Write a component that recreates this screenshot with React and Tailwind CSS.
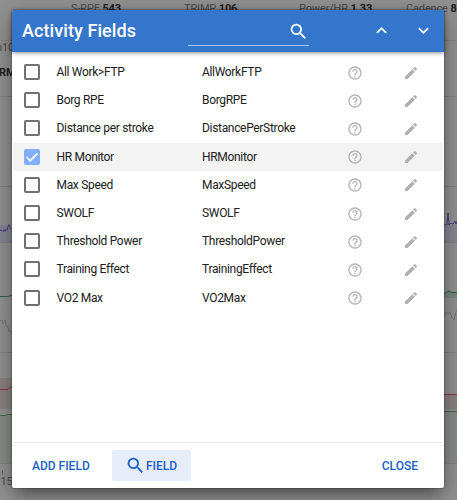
import React, { useState } from 'react';
import { MdSearch, MdExpandLess, MdExpandMore, MdHelpOutline, MdEdit } from 'react-icons/md';

const FIELDS = [
  { name: 'All Work>FTP', code: 'AllWorkFTP' },
  { name: 'Borg RPE', code: 'BorgRPE' },
  { name: 'Distance per stroke', code: 'DistancePerStroke' },
  { name: 'HR Monitor', code: 'HRMonitor' },
  { name: 'Max Speed', code: 'MaxSpeed' },
  { name: 'SWOLF', code: 'SWOLF' },
  { name: 'Threshold Power', code: 'ThresholdPower' },
  { name: 'Training Effect', code: 'TrainingEffect' },
  { name: 'VO2 Max', code: 'VO2Max' },
];

// Dimmed activity page behind the dialog
function Backdrop() {
  return (
    <div className="absolute inset-0 bg-[#919191] text-[11px] leading-[14px] tracking-[-0.15px] whitespace-nowrap text-[#4b4b4b]">
      <svg width="457" height="500" viewBox="0 0 457 500" fill="none" className="absolute inset-0">
        <path d="M0 40.5H457M0 96.5H457M0 186.5H457" stroke="#838383" />
        <path d="M0 225h12v17H0zM444 225h13v17h-13z" fill="#858592" />
        <path d="M0 378h12v30H0zM444 395h13v13h-13z" fill="#8a8080" />
        <path d="M0 415h12v48H0zM444 412h13v51h-13z" fill="#868b86" />
        <path d="M444 293l5-2 8 2v5h-13z" fill="#78877d" />
        <path d="M0 242.5H457M0 352.5H457M0 408.5H457M0 463.5H457" stroke="#838383" />
        <path d="M0 230l2 .5 1 1 1-2 1 2 1-2 1 1 1-4 1-2 1 3 1 1 1 1" stroke="#4a3d82" />
        <path d="M444 226l2-2 1 1 1-12 1 12 2-2 1 1 2-1 1-2 1 3 1-3" stroke="#4a3d82" />
        <path d="M0 296.500h7l5-1" stroke="#2b5e49" />
        <path d="M444 294l2-1.500 3-1.500 3 1.500h5" stroke="#2c6138" />
        <path d="M0 321l2-1 1 4 2-4 1 6 2 1 1 5 1-2 2 3M444 317l2-5 2 2 2-2 2 6 2 2 1-5 2-5" stroke="#777" />
        <path d="M0 389.500h8l2-2 2-1M444 394.500h13" stroke="#8b3349" />
        <path d="M0 415.500h5l3-1h4M444 411.500h13" stroke="#426a42" />
        <path d="M2.500 470v5" stroke="#666" />
      </svg>
      <span className="absolute left-[71px] top-[2px]">S-RPE <b className="font-bold text-[#1c1c1c]">543</b></span>
      <span className="absolute left-[184px] top-[2px]">TRIMP <b className="font-bold text-[#1c1c1c]">106</b></span>
      <span className="absolute left-[299px] top-[2px]">Power/HR <b className="font-bold text-[#1c1c1c]">1.33</b></span>
      <span className="absolute left-[406px] top-[2px]">Cadence <b className="font-bold text-[#1c1c1c]">8</b></span>
      <span className="absolute left-[-4px] top-[41px]">n10</span>
      <span className="absolute left-[-1px] top-[66px] font-bold text-[#222]">RM</span>
      <span className="absolute left-[-2px] top-[475px]">:15</span>
    </div>
  );
}

function Checkbox({ checked, onChange }) {
  return (
    <button
      role="checkbox"
      aria-checked={checked}
      onClick={onChange}
      className={`flex h-[16px] w-[16px] items-center justify-center rounded-[2px] ${
        checked ? 'bg-[#82aefa]' : 'border-2 border-[#707070]'
      }`}
    >
      {checked && (
        <svg width="16" height="16" viewBox="0 0 16 16" fill="none">
          <path d="M2.500 8l3.700 3.700L13.500 4.300" stroke="#fff" strokeWidth="1.700" />
        </svg>
      )}
    </button>
  );
}

export default function App() {
  const [selected, setSelected] = useState('HRMonitor');

  return (
    <div className="relative h-[500px] w-[457px] overflow-hidden font-[Roboto,sans-serif]">
      <Backdrop />
      <div className="relative flex h-full pt-[10px] pr-[13px] pb-[12px] pl-[12px]">
        <div className="flex flex-1 flex-col rounded-[2px] bg-white shadow-[0_9px_13px_-6px_rgba(0,0,0,0.35),0_0_2px_rgba(0,0,0,0.5),0_6px_22px_2px_rgba(0,0,0,0.28)]">
          <header className="z-10 flex h-[41.500px] shrink-0 items-center rounded-t-[2px] bg-[#3476cc] pl-[10px] text-white shadow-[0_1px_4px_rgba(0,0,0,0.45)]">
            <h1 className="w-[166px] text-[18px] leading-[24px] font-medium tracking-[0.08px]">Activity Fields</h1>
            <div className="mt-[1px] flex h-[29px] w-[121px] items-start justify-end border-b border-[#a9c6ec] pt-[4px]">
              <MdSearch size={21} />
            </div>
            <MdExpandLess size={21} className="ml-[62px]" />
            <MdExpandMore size={21} className="ml-[21px]" />
          </header>

          <div className="flex-1 px-px pt-[6.500px]">
            {FIELDS.map((field) => (
              <div
                key={field.code}
                className={`flex h-[28.200px] items-center pl-[11px] text-[12px] tracking-[-0.32px] text-[#202020] ${
                  selected === field.code ? 'bg-[#f3f3f3]' : ''
                }`}
              >
                <Checkbox
                  checked={selected === field.code}
                  onChange={() => setSelected(field.code)}
                />
                <span className="ml-[16.500px] w-[145.500px]">{field.name}</span>
                <span className="w-[145px]">{field.code}</span>
                <MdHelpOutline size={16} className="mt-px text-[#b3b3b3]" />
                <MdEdit size={16} className="mt-px ml-[40px] text-[#b0b0b0]" />
              </div>
            ))}
          </div>

          <footer className="mx-px flex h-[46px] shrink-0 items-center border-t-[1.500px] border-[#e8e8e8] pr-[25px] pl-[19px] text-[12px] font-medium text-[#1a5fc8]">
            <button className="w-[80px] text-left">ADD FIELD</button>
            <button className="flex h-[31px] w-[79px] items-center rounded-[2px] bg-[#e6edf8] pl-[13px]">
              <MdSearch size={21} />
              FIELD
            </button>
            <button className="ml-auto">CLOSE</button>
          </footer>
        </div>
      </div>
    </div>
  );
}
